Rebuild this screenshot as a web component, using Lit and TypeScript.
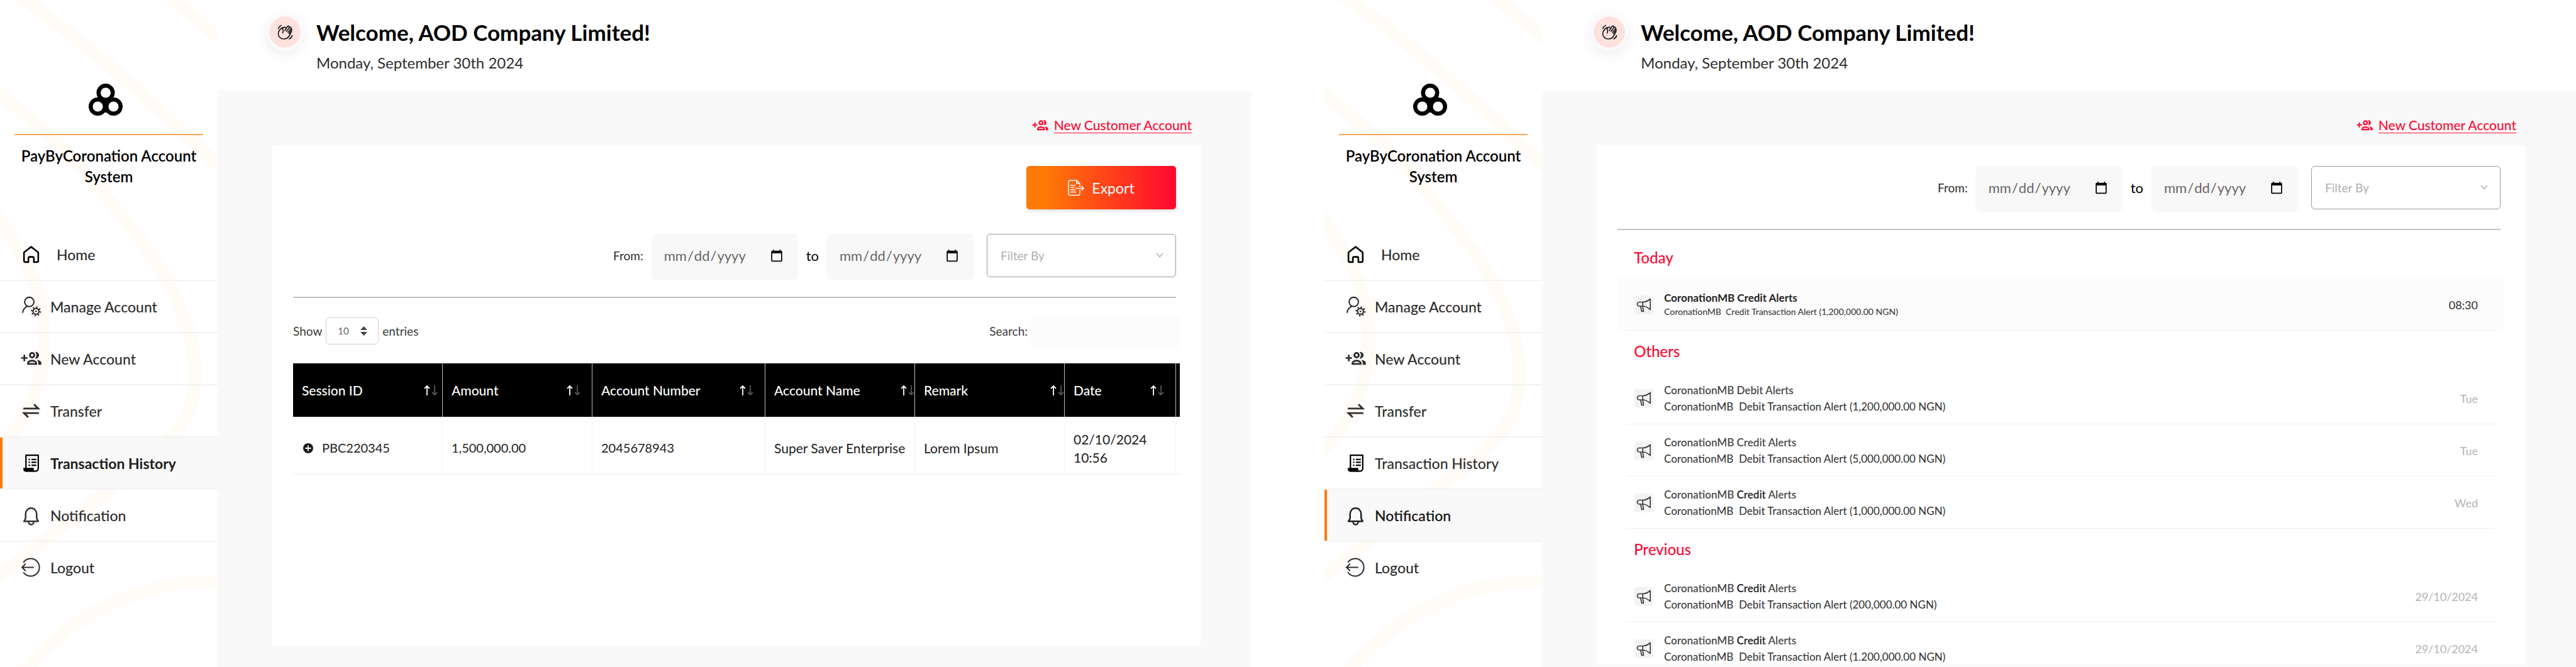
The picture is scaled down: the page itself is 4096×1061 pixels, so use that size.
import { LitElement, html, css, svg, nothing } from "lit";
import { customElement, property } from "lit/decorators.js";

const S = (box: string, body: unknown, cls = "") =>
  html`<svg class="ic ${cls}" viewBox=${box} aria-hidden="true">${body}</svg>`;

const people = svg`
  <path d="M5.500 4.500v10M.5 9.500h10" stroke="currentColor" stroke-width="2.600" fill="none"/>
  <circle cx="17.500" cy="5.200" r="3.400" stroke="currentColor" stroke-width="2.800" fill="none"/>
  <path d="M11.200 18.600v-1.400c0-2.300 3.600-3.500 6.300-3.500s6.300 1.200 6.300 3.500v1.400z" stroke="currentColor" stroke-width="2.800" fill="none"/>
  <path d="M23 .5a4.700 4.700 0 0 1 0 9.400c1-1.300 1.600-2.900 1.600-4.700S24 1.800 23 .5z" fill="currentColor" stroke="currentColor" stroke-width="1"/>
  <path d="M27 20v-3c0-1.900-.9-3.300-2.300-4.600 3.800.4 7 2 7 4.600v3z" fill="currentColor"/>`;

const icons: Record<string, unknown> = {
  home: S("0 0 32 32", svg`<path d="M5 13 16 4.500 27 13v13.500a1.500 1.500 0 0 1-1.500 1.500h-5.300v-6a2 2 0 0 0-2-2h-4.400a2 2 0 0 0-2 2v6H6.500A1.500 1.500 0 0 1 5 26.500z" fill="none" stroke="#000" stroke-width="2.500" stroke-linejoin="round"/>`),
  manage: S("0 0 32 34", svg`<g fill="none" stroke="currentColor"><circle cx="13" cy="9.500" r="7.600" stroke-width="2.200"/><path d="M2.200 27.500c0-5 3.600-9.500 8.300-11" stroke-width="2.200"/><circle cx="24" cy="25" r="4.800" stroke-width="2.200"/><circle cx="24" cy="25" r="6.900" stroke-width="2.800" stroke-dasharray="2.200 3.220"/></g><circle cx="24" cy="25" r="1.400" fill="currentColor"/>`),
  people: S("0 0 32 21", people),
  transfer: S("0 0 32 32", svg`<path d="M4 12.500h23L20.500 6M28 19.500H5l6.500 6.500" fill="none" stroke="currentColor" stroke-width="2.800"/>`),
  history: S("0 0 32 32", svg`<path d="M8 24V4h19v20.500a4 4 0 0 1-4 4H7.500" fill="none" stroke="#000" stroke-width="2.200" stroke-linejoin="round"/><path d="M4 23.500h16v2.500a3 3 0 0 0 2.500 3.300H7.500A3.500 3.500 0 0 1 4 25.800z" fill="#000"/><path d="M12 10.500h2.200M16.500 10.500H24M12 15h2.200M16.500 15H24M12 19.500h2.200M16.500 19.500H24" stroke="#000" stroke-width="2.200"/>`),
  bell: S("0 0 32 32", svg`<path d="M5 25.500h22L24.500 21v-6.500a8.500 9.500 0 0 0-17 0V21z" fill="none" stroke="currentColor" stroke-width="2.400" stroke-linejoin="round"/><path d="M12 26.500a4 4 0 0 0 8 0" fill="none" stroke="currentColor" stroke-width="2.400"/>`),
  logout: S("0 0 32 32", svg`<path d="M4 8.500a13.500 13.500 0 1 1 0 15M20 16H2M7.500 10.500 2 16l5.500 5.500" fill="none" stroke="currentColor" stroke-width="2"/>`),
};

@customElement("side-nav")
class SideNav extends LitElement {
  @property() active = "";
  static styles = css`
    :host { display: block; width: 346px; flex: none; position: relative; background: #fff; overflow: hidden; }
    .arcs { position: absolute; inset: 0; width: 100%; height: 100%; }
    .arcs path { fill: none; stroke: #fffbf6; stroke-width: 21; }
    .inner { position: relative; }
    .brand { padding: 132px 23px 0; height: 232px; text-align: center; }
    .logo { display: block; width: 58px; height: 53px; margin: 0 auto 28px; padding-right: 10px; }
    .rule { height: 2px; background: #ffa757; }
    h1 { margin: 16px 0 0; font-size: 24px; line-height: 33px; font-weight: 600; color: #000; }
    ul { list-style: none; margin: 0; padding: 0; }
    li { border-bottom: 2px solid #f3f3f3; }
    li:last-child { border: 0; }
    li.on { background: #f9f9f9; border-color: #f3f3f3; box-shadow: inset 4px 0 #ff7a0a; }
    a { display: flex; align-items: center; height: 81px; padding-left: 33px; gap: 14px; font-size: 23px; font-weight: 500; color: #2e2e2e; text-decoration: none; }
    .home { gap: 24px; }
    .on a { color: #1c1c1c; font-weight: 600; }
    .on .strong { font-weight: 700; }
    .ic { width: 33px; height: 33px; flex: none; }
  `;
  items = [
    ["home", "Home"], ["manage", "Manage Account"], ["people", "New Account"], ["transfer", "Transfer"],
    ["history", "Transaction History"], ["bell", "Notification"], ["logout", "Logout"],
  ];
  render() {
    return html`
      <svg class="arcs" viewBox="0 0 346 1061" preserveAspectRatio="xMinYMin slice" aria-hidden="true">
        <path d="M262 -12 356 66"/>
        <path d="M28 -8Q170 90 352 268"/>
        <path d="M-10 140C60 200 110 240 150 290C200 350 240 400 266 446C295 500 310 550 310 598C310 650 290 680 268 700C240 735 210 755 176 779C120 820 60 870-10 922"/>
        <path d="M-10 335C20 380 45 420 54 446C65 480 70 510 70 550C70 600 50 650 16 695L-10 725"/>
        <path d="M36 1070C90 1010 130 980 178 960C230 935 290 924 350 925"/>
      </svg>
      <div class="inner">
        <div class="brand">
          <svg class="logo" viewBox="0 0 58 53" aria-hidden="true">
            <g fill="none" stroke="#000" stroke-width="6.500"><circle cx="29" cy="15.500" r="11.300"/><circle cx="16.500" cy="37.500" r="11.300"/><circle cx="41.500" cy="37.500" r="11.300"/></g>
            <path d="M20 25.500h18l-5 8V47h-8V33.500z"/>
          </svg>
          <div class="rule"></div>
          <h1>PayByCoronation Account System</h1>
        </div>
        <nav aria-label="Main">
          <ul>
            ${this.items.map(([k, t]) => html`<li class=${t === this.active ? "on" : ""}>
              <a href="#${k}" class="${k} ${k === "history" ? "strong" : ""}" aria-current=${t === this.active ? "page" : nothing}>${icons[k]}<span>${t}</span></a></li>`)}
          </ul>
        </nav>
      </div>`;
  }
}

@customElement("filter-bar")
class FilterBar extends LitElement {
  static styles = css`
    :host { display: block; border-bottom: 2px solid #c4c4c4; padding-bottom: 31px; }
    form { display: flex; justify-content: flex-end; align-items: center; margin: 0; font: 19px/24px Lato, "Liberation Sans", sans-serif; color: #2e2e2e; }
    input { box-sizing: border-box; width: 231px; height: 69px; border: 0; border-radius: 5px; background: #f8f8f8; box-shadow: 0 3px 5px rgba(0,0,0,.05); padding: 0 20px 0 18px; font: 22px/28px Lato, "Liberation Sans", sans-serif; color: #666; margin: 0 14px; }
    .to { font-size: 22px; color: #000; }
    select { appearance: none; box-sizing: border-box; width: 301px; height: 69px; margin-left: 8px; border: 1px solid #999; border-radius: 6px; background: #fff; padding: 0 21px; font: 19px/24px Lato, "Liberation Sans", sans-serif; color: #b0b0b0; }
    .pick { position: relative; display: flex; }
    .chev { position: absolute; right: 20px; top: 29px; width: 12px; height: 10px; pointer-events: none; }
  `;
  render() {
    return html`<form>
      <label for="from">From:</label><input id="from" type="date">
      <label class="to" for="to">to</label><input id="to" type="date">
      <div class="pick"><select aria-label="Filter By"><option>Filter By</option></select>
      <svg class="chev" viewBox="0 0 12 10" aria-hidden="true"><path d="M1 2l5 5.500L11 2" fill="none" stroke="#aaa" stroke-width="1.400"/></svg></div>
    </form>`;
  }
}

@customElement("history-table")
class HistoryTable extends LitElement {
  static styles = css`
    :host { display: block; margin-right: -6px; font-size: 19px; color: #3c3c3c; }
    .tools { display: flex; justify-content: space-between; align-items: center; height: 104px; }
    label { display: flex; align-items: center; gap: 6px; }
    .len { position: relative; display: flex; }
    .len select { appearance: none; width: 84px; height: 43px; border: 1px solid #d2d2d2; border-radius: 5px; background: #fff; padding: 0 18px; font: 15px Lato, "Liberation Sans", sans-serif; color: #666; }
    .len svg { position: absolute; right: 18px; top: 14px; width: 11px; height: 15px; pointer-events: none; }
    .find input { box-sizing: border-box; width: 236px; height: 50px; border: 0; border-radius: 8px; background: #fcfcfc; box-shadow: 0 3px 8px rgba(0,0,0,.02); font: inherit; }
    table { width: 100%; table-layout: fixed; border-collapse: separate; border-spacing: 0; }
    .col { width: 238px; }
    .wide { width: 275px; }
    .tail { width: 6px; }
    th { background: #000; height: 85px; box-sizing: border-box; color: #fff; font-size: 21px; font-weight: 500; text-align: left; padding: 0 0 0 14px; border-right: 1px solid #bbb; }
    th.end { border: 0; padding: 0; }
    .head { display: flex; align-items: center; justify-content: space-between; }
    .sort { border: 0; background: none; padding: 0; display: flex; width: 22px; height: 18px; margin-right: 18px; }
    .near { margin-right: 7px; }
    .edge { margin-right: 0; }
    .gap td { height: 8px; padding: 0; border: 0; }
    td { height: 84px; box-sizing: border-box; padding: 0 0 0 14px; color: #222; font-size: 20px; line-height: 29px; border-right: 1px solid #f3f3f3; border-top: 1px solid #f6f6f6; border-bottom: 2px solid #f3f3f3; white-space: nowrap; }
    td.name { font-size: 21px; }
    td.end { border-right: 0; border-top: 0; padding: 0; }
    td.wrap { white-space: normal; padding-right: 40px; font-size: 21px; }
    .id { display: flex; align-items: center; gap: 14px; padding-left: 2px; }
    .id svg { width: 16px; height: 16px; }
  `;
  cols = [["Session ID", "near"], ["Amount", ""], ["Account Number", ""], ["Account Name", "edge"], ["Remark", "edge"], ["Date", ""]];
  render() {
    return html`
      <div class="tools">
        <label>Show <span class="len"><select><option>10</option></select>
          <svg viewBox="0 0 11 15" aria-hidden="true"><path d="M5.500 0 11 6H0zM5.500 15 0 9h11z" fill="#444"/></svg></span> entries</label>
        <label class="find">Search: <input type="search"></label>
      </div>
      <table>
        <colgroup><col class="col"><col class="col"><col class="wide"><col class="col"><col class="col"><col><col class="tail"></colgroup>
        <thead><tr>${this.cols.map(([c, k]) => html`<th scope="col"><div class="head">${c}
          <button class="sort ${k}" aria-label="Sort by ${c}"><svg viewBox="0 0 22 18" width="22" height="18" fill="none" stroke-width="1.800"><path d="M5 17V2M1 6l4-4 4 4" stroke="#fff"/><path d="M17 1v15M13 12l4 4 4-4" stroke="#555"/></svg></button></div></th>`)}<th class="end"></th></tr></thead>
        <tbody>
          <tr class="gap"><td colspan="7"></td></tr>
          <tr>
            <td><div class="id"><svg viewBox="0 0 16 16" aria-hidden="true"><circle cx="8" cy="8" r="8" fill="#1c1c1c"/><path d="M8 3.500v9M3.500 8h9" stroke="#fff" stroke-width="1.800"/></svg>PBC220345</div></td>
            <td>1,500,000.00</td><td>2045678943</td><td class="name">Super Saver Enterprise</td><td class="name">Lorem Ipsum</td><td class="wrap">02/10/2024 10:56</td><td class="end"></td>
          </tr>
        </tbody>
      </table>`;
  }
}

type Note = { kind: string; strong?: boolean; text: string; when: string };
const groups: { name: string; notes: Note[] }[] = [
  { name: "Today", notes: [{ kind: "Credit", text: "Credit Transaction Alert (1,200,000.00 NGN)", when: "08:30" }] },
  { name: "Others", notes: [
    { kind: "Debit", text: "Debit Transaction Alert (1,200,000.00 NGN)", when: "Tue" },
    { kind: "Credit", text: "Debit Transaction Alert (5,000,000.00 NGN)", when: "Tue" },
    { kind: "Credit", strong: true, text: "Debit Transaction Alert (1,000,000.00 NGN)", when: "Wed" }] },
  { name: "Previous", notes: [
    { kind: "Credit", strong: true, text: "Debit Transaction Alert (200,000.00 NGN)", when: "29/10/2024" },
    { kind: "Credit", strong: true, text: "Debit Transaction Alert (1.200,000.00 NGN)", when: "29/10/2024" }] },
];

@customElement("notice-list")
class NoticeList extends LitElement {
  static styles = css`
    :host { display: block; margin-right: -6px; padding-top: 11px; }
    h3 { margin: 0; padding: 16px 26px 16px; font-size: 24px; line-height: 34px; font-weight: 500; color: #ff0a33; }
    ul { list-style: none; margin: 0; padding: 0; }
    li { display: flex; align-items: center; height: 83px; padding: 0 42px 0 27px; box-sizing: border-box; position: relative; }
    li::after { content: ""; position: absolute; left: 14px; right: 14px; bottom: 0; height: 1px; background: #f0f0f0; }
    .today { background: #fcfcfc; }
    .chip { width: 30px; height: 30px; border-radius: 4px; background: #f3f3f3; display: grid; place-items: center; margin-right: 17px; flex: none; }
    .chip svg { width: 24px; height: 24px; }
    .body { flex: 1; }
    .name { font-size: 17px; line-height: 26px; font-weight: 600; color: #4a4a4a; }
    .today .name { color: #222; font-weight: 700; line-height: 22px; }
    b { font-weight: 600; color: #1c1c1c; }
    .text { font-size: 17px; line-height: 26px; color: #2e2e2e; }
    .today .text { font-size: 14px; line-height: 22px; }
    time { font-size: 18px; line-height: 24px; color: #b4b4b4; }
    .today time { color: #2e2e2e; }
  `;
  render() {
    return groups.map((g) => html`<section><h3>${g.name}</h3><ul>${g.notes.map((n) => html`
      <li class=${g.name === "Today" ? "today" : ""}>
        <span class="chip"><svg viewBox="0 0 24 24" fill="none" stroke="#3c3c3c" stroke-width="1.700" stroke-linejoin="round" aria-hidden="true"><path d="M10 7.500H4.500A3 3 0 0 0 1.500 10.500a3 3 0 0 0 3 3.500H10zM10 7.500c4 0 8-1.500 12-5v17c-4-3.500-8-5.500-12-5.500M6.500 14l2 8.500h2.800L10 14"/></svg></span>
        <div class="body"><div class="name">CoronationMB ${n.strong ? html`<b>${n.kind}</b>` : n.kind} Alerts</div>
        <div class="text">CoronationMB&nbsp; ${n.text}</div></div>
        <time>${n.when}</time>
      </li>`)}</ul></section>`);
  }
}

@customElement("bank-screen")
class BankScreen extends LitElement {
  @property() view = "";
  static styles = css`
    :host { display: flex; flex: 1; min-width: 0; background: #f9f9f9; }
    .page { flex: 1; min-width: 0; display: flex; flex-direction: column; }
    header { display: flex; height: 144px; box-sizing: border-box; background: #fff; padding: 21px 77px; gap: 20px; }
    .wave { width: 50px; height: 50px; border: 5px solid #fafafa; border-radius: 50%; background: #ffe2de; background-clip: padding-box; box-shadow: 0 6px 22px rgba(0,0,0,.07); display: grid; place-items: center; flex: none; }
    .wave svg { width: 25px; height: 25px; }
    h2 { margin: 10px 0 0; font-size: 35px; line-height: 40px; font-weight: 700; color: #000; }
    .date { margin: 8px 0 0; font-size: 24px; line-height: 42px; color: #2e2e2e; }
    main { flex: 1; min-height: 0; display: flex; flex-direction: column; padding: 0 81px 34px 87px; }
    .top { display: flex; justify-content: flex-end; align-items: flex-end; height: 87px; padding: 0 14px 19px 0; box-sizing: border-box; }
    .new { display: flex; align-items: center; gap: 9px; color: #ff0a33; text-decoration: none; font-size: 21px; line-height: 24px; font-weight: 500; }
    .new span { border-bottom: 1px solid #ff0a33; }
    .new svg { width: 26px; height: 17px; }
    .card { flex: 1; min-height: 0; overflow: hidden; background: #fff; padding: 33px 39px 0 33px; }
    .notices { padding-bottom: 4px; }
    .export { display: flex; align-items: center; justify-content: center; gap: 12px; width: 238px; height: 69px; margin: 0 0 39px auto; border: 0; border-radius: 5px; background: linear-gradient(90deg, #ff7a05 12%, #ff0a2f 98%); box-shadow: 0 3px 5px rgba(0,0,0,.12); color: #fff; font: 400 23px/28px Lato, "Liberation Sans", sans-serif; }
    .export svg { width: 26px; height: 26px; }
  `;
  render() {
    const history = this.view === "Transaction History";
    return html`
      <side-nav .active=${this.view}></side-nav>
      <div class="page">
        <header>
          <div class="wave"><svg viewBox="0 0 25 25" fill="none" stroke="#1c1c1c" stroke-width="1.700" stroke-linecap="round" stroke-linejoin="round" aria-hidden="true">
            <path d="M8.500 13.500 9.500 9 8 7.500 9.500 5 7.500 5C3.500 8 1.200 11.500 1.500 15.500c.6 4.500 4.200 7.500 8.500 7.500 4.500 0 7.500-2 9.300-5.500L22.500 11V8"/>
            <path d="M9.500 5c1.500-1.500 3-1 3.800.5M12 9.500 16 3.200c1-1.500 2.700-.9 2.500.6M14.500 11l5-6.700c1.200-1 2.500 0 2.200 1.500M17 12.500l4.700-6.200c1 .2 1.400 1 .8 2.200L18.500 14.500M1.500 6.500C2.300 4 3.800 2.500 6 1.500M23.500 17.500c-.6 2.700-2.200 4.500-4.500 5.500"/></svg></div>
          <div><h2>Welcome, AOD Company Limited!</h2><p class="date">Monday, September 30th 2024</p></div>
        </header>
        <main class=${history ? "" : "notices"}>
          <div class="top"><a class="new" href="#new">${S("0 0 32 21", people)}<span>New Customer Account</span></a></div>
          <div class="card">
            ${history ? html`<button class="export"><svg viewBox="0 0 26 26" fill="none" stroke="#fff" stroke-width="1.500" aria-hidden="true"><path d="M19 16v6.500a2 2 0 0 1-2 2H3a2 2 0 0 1-2-2V3a2 2 0 0 1 2-2h11l5 5v5M14 1v5h5M4 9h8M4 12.500h6M4 16h8M4 19.500h9M12 13.500h13M21.500 10l3.500 3.500-3.500 3.500"/></svg>Export</button>` : nothing}
            <filter-bar></filter-bar>
            ${history ? html`<history-table></history-table>` : html`<notice-list></notice-list>`}
          </div>
        </main>
      </div>`;
  }
}

@customElement("app-root")
class AppRoot extends LitElement {
  static styles = css`
    :host { display: flex; gap: 116px; height: 100vh; overflow: hidden; background: #fff; font-family: Lato, "Liberation Sans", sans-serif; }
  `;
  render() {
    return html`<bank-screen view="Transaction History"></bank-screen><bank-screen view="Notification"></bank-screen>`;
  }
}
